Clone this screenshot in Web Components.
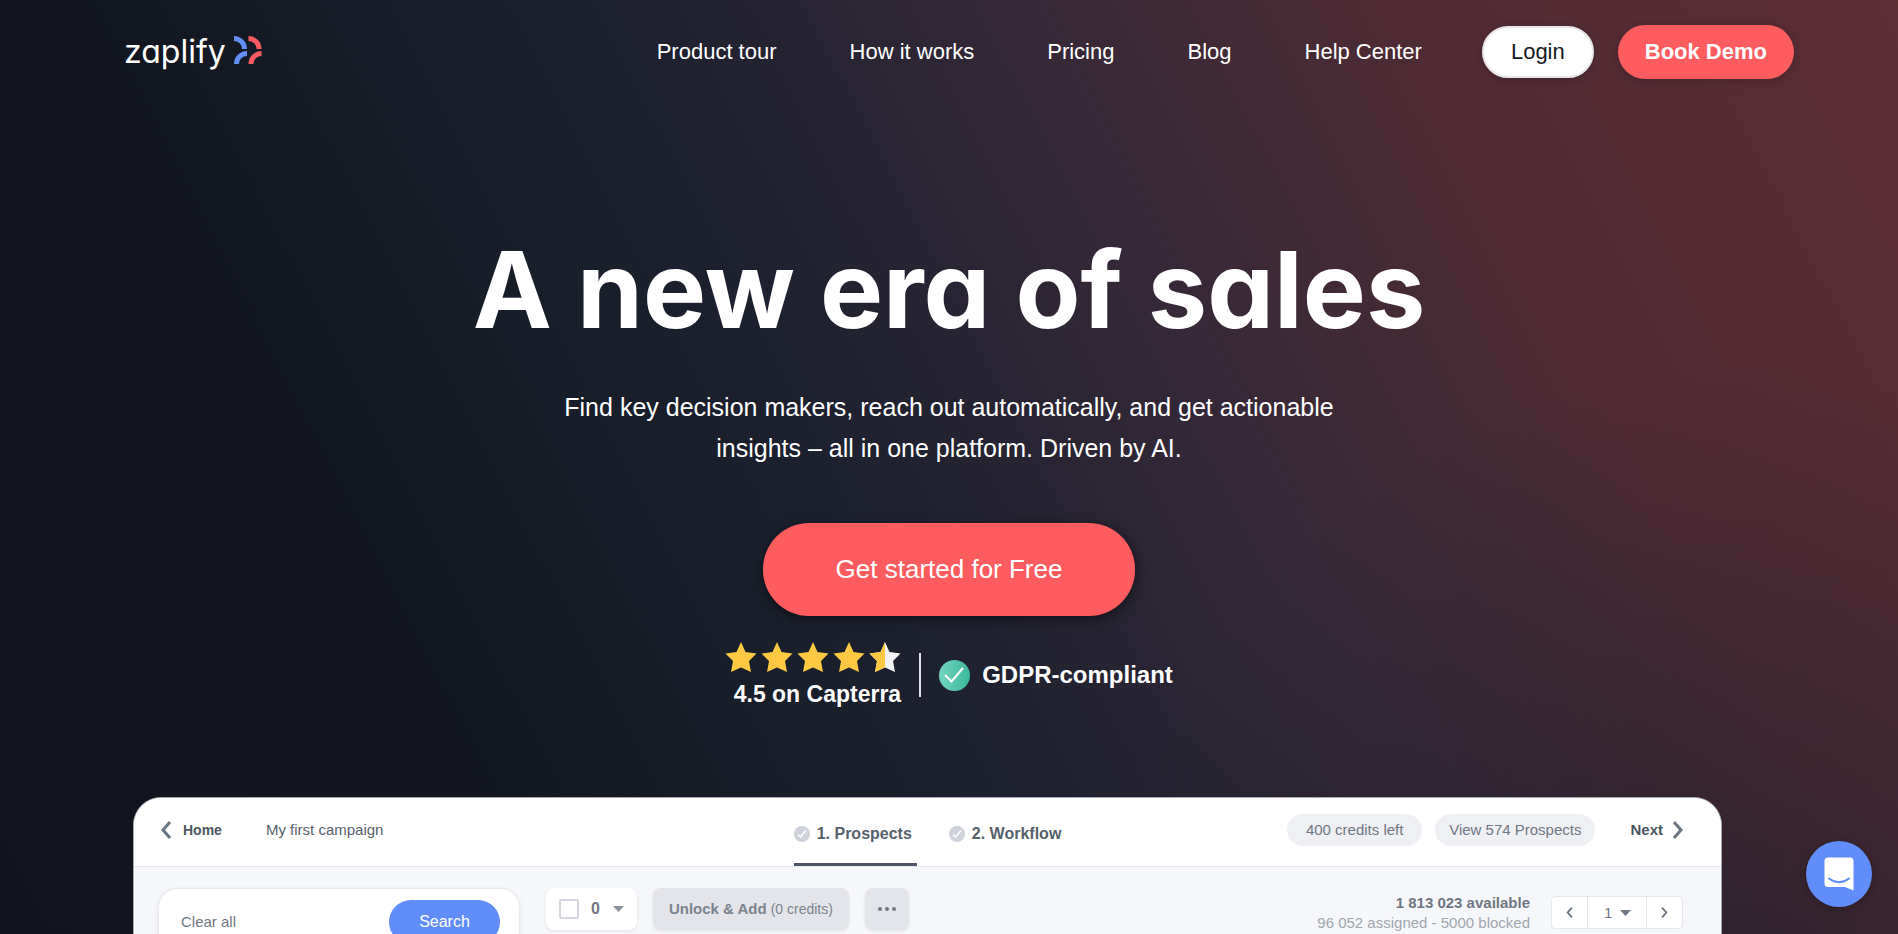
<!DOCTYPE html>
<html lang="en">
<head>
<meta charset="utf-8">
<meta name="viewport" content="width=device-width, initial-scale=1">
<title>Zaplify</title>
<style>
  body {
    margin: 0;
    height: 100vh;
    overflow: hidden;
    background:
      radial-gradient(circle at 92% 108%, rgba(24, 26, 40, 0.55) 0%, rgba(24, 26, 40, 0) 32%),
      linear-gradient(63deg, #11141e 0%, #121620 24%, #161d28 34%, #1e2130 46%, #282433 54%, #352838 62%, #442a35 72%, #502b34 79%, #5a2e33 100%);
    color: #fff;
    font-family: "Liberation Sans", Arial, sans-serif;
  }
</style>
</head>
<body>
<page-header>
  <nav-link href="#tour">Product tour</nav-link>
  <nav-link href="#how">How it works</nav-link>
  <nav-link href="#pricing">Pricing</nav-link>
  <nav-link href="#blog">Blog</nav-link>
  <nav-link href="#help">Help Center</nav-link>
  <pill-button slot="actions" variant="light">Login</pill-button>
  <pill-button slot="actions">Book Demo</pill-button>
</page-header>

<hero-section>
  <span slot="title">A new era of sales</span>
  <span slot="text">Find key decision makers, reach out automatically, and get actionable insights – all in one platform. Driven by AI.</span>
  <pill-button slot="action" variant="large">Get started for Free</pill-button>
  <star-rating slot="proof" value="4.5">4.5 on Capterra</star-rating>
  <check-badge slot="proof">GDPR-compliant</check-badge>
</hero-section>

<campaign-panel></campaign-panel>
<chat-launcher></chat-launcher>

<script>
class ZaplifyLogo extends HTMLElement {
  constructor() {
    super();
    this.attachShadow({ mode: "open" });
  }

  connectedCallback() {
    this.shadowRoot.innerHTML = `
      <style>
        :host { display: block; }

        a {
          display: flex;
          align-items: center;
          gap: 8px;
          color: #fff;
          text-decoration: none;
          font: 400 32px/36px Inter, sans-serif;
          font-feature-settings: "cv11";
        }

        svg { display: block; margin-bottom: 4px; }
      </style>
      <a href="#home">zaplify
        <svg width="28" height="28" viewBox="0 0 28 28" fill="none" stroke-width="5" aria-hidden="true">
          <path d="M0 2.500 A10.500 10.500 0 0 1 10.500 13 M2.500 28 A10.500 10.500 0 0 1 13 17.500" stroke="#638df7"/>
          <path d="M14.500 2.500 A10.500 10.500 0 0 1 25 13 M17 28 A10.500 10.500 0 0 1 27.500 17.500" stroke="#fb5a5f"/>
        </svg>
      </a>
    `;
  }
}

class NavLink extends HTMLElement {
  constructor() {
    super();
    this.attachShadow({ mode: "open" });
  }

  connectedCallback() {
    this.shadowRoot.innerHTML = `
      <style>
        :host { display: block; }

        a {
          color: #fff;
          font-size: 22px;
          line-height: 28px;
          white-space: nowrap;
          text-decoration: none;
        }

        a:hover { opacity: 0.8; }
      </style>
      <a href="${this.getAttribute("href")}"><slot></slot></a>
    `;
  }
}

class PillButton extends HTMLElement {
  constructor() {
    super();
    this.attachShadow({ mode: "open" });
  }

  connectedCallback() {
    this.shadowRoot.innerHTML = `
      <style>
        :host { display: block; }

        button {
          display: block;
          padding: 0 27px;
          border: 0;
          border-radius: 27px;
          background: #ff5c5f;
          box-shadow: 0 2px 8px rgba(0, 0, 0, 0.2);
          color: #fff;
          font: 700 22px/54px "Liberation Sans", Arial, sans-serif;
          white-space: nowrap;
          cursor: pointer;
        }

        :host([variant="light"]) button {
          border: 2px solid #e8e6e8;
          background: #fff;
          color: #151a22;
          font-weight: 400;
          line-height: 48px;
        }

        :host([variant="large"]) button {
          padding: 0 73px;
          border-radius: 46px;
          box-shadow: 0 3px 12px rgba(0, 0, 0, 0.5);
          font-size: 26px;
          font-weight: 400;
          line-height: 93px;
        }
      </style>
      <button type="button"><slot></slot></button>
    `;
  }
}

class PageHeader extends HTMLElement {
  constructor() {
    super();
    this.attachShadow({ mode: "open" });
  }

  connectedCallback() {
    this.shadowRoot.innerHTML = `
      <style>
        :host { display: block; }

        header {
          display: flex;
          align-items: center;
          justify-content: space-between;
          padding: 25px 104px 0 124px;
        }

        .right { display: flex; align-items: center; gap: 60px; }
        nav { display: flex; gap: 73px; }
        .actions { display: flex; align-items: center; gap: 24px; }
      </style>
      <header>
        <zaplify-logo></zaplify-logo>
        <div class="right">
          <nav aria-label="Main"><slot></slot></nav>
          <div class="actions"><slot name="actions"></slot></div>
        </div>
      </header>
    `;
  }
}

class HeroSection extends HTMLElement {
  constructor() {
    super();
    this.attachShadow({ mode: "open" });
  }

  connectedCallback() {
    this.shadowRoot.innerHTML = `
      <style>
        :host { display: block; }

        section {
          display: flex;
          flex-direction: column;
          align-items: center;
          padding: 146px 24px 0;
          text-align: center;
        }

        h1 {
          margin: 0;
          font: 700 106px/130px Inter, sans-serif;
          font-feature-settings: "cv11";
        }

        p {
          max-width: 800px;
          margin: 32px 0 54px;
          font-size: 25px;
          line-height: 41px;
        }

        .proof { display: flex; align-items: center; margin-top: 26px; }
      </style>
      <section>
        <h1><slot name="title"></slot></h1>
        <p><slot name="text"></slot></p>
        <slot name="action"></slot>
        <div class="proof"><slot name="proof"></slot></div>
      </section>
    `;
  }
}

class StarRating extends HTMLElement {
  constructor() {
    super();
    this.attachShadow({ mode: "open" });
  }

  connectedCallback() {
    const value = Number(this.getAttribute("value"));
    const shape = "M16 0 L20.500 10 L31.500 11.500 L24 19 L26 30 L16 25.500 L6 30 L8 19 L0.500 11.500 L11.500 10 Z";
    let stars = "";
    for (let i = 0; i < 5; i++) {
      const full = value - i >= 1;
      stars += `
        <svg width="32" height="30" viewBox="0 0 32 30" aria-hidden="true">
          <path d="${shape}" fill="${full ? "#ffc843" : "#f3f3f5"}"/>
          ${full ? "" : '<path d="M16 0 L11.500 10 L0.500 11.500 L8 19 L6 30 L16 25.500 Z" fill="#ffc843"/>'}
        </svg>`;
    }

    this.shadowRoot.innerHTML = `
      <style>
        :host { display: flex; flex-direction: column; align-items: flex-end; }
        .stars { display: flex; gap: 4px; }
        svg { display: block; }
        .label { font-size: 23px; font-weight: 700; line-height: 28px; margin-top: 8px; }
      </style>
      <div class="stars">${stars}</div>
      <div class="label"><slot></slot></div>
    `;
  }
}

class CheckBadge extends HTMLElement {
  constructor() {
    super();
    this.attachShadow({ mode: "open" });
  }

  connectedCallback() {
    this.shadowRoot.innerHTML = `
      <style>
        :host {
          display: flex;
          align-items: center;
          gap: 12px;
          height: 44px;
          margin-left: 18px;
          padding-left: 18px;
          border-left: 2px solid #e4e4e8;
          font-size: 24px;
          font-weight: 700;
        }
      </style>
      <svg width="31" height="31" viewBox="0 0 31 31" aria-hidden="true">
        <defs>
          <linearGradient id="fill"><stop stop-color="#74d4c0"/><stop offset="1" stop-color="#3bb89b"/></linearGradient>
        </defs>
        <circle cx="15.500" cy="15.500" r="15.500" fill="url(#fill)"/>
        <path d="M6 15 L12.500 21.500 L24 8" fill="none" stroke="#fff" stroke-width="2"/>
      </svg>
      <slot></slot>
    `;
  }
}

class CampaignPanel extends HTMLElement {
  constructor() {
    super();
    this.attachShadow({ mode: "open" });
  }

  connectedCallback() {
    const tick = `
      <svg width="16" height="16" viewBox="0 0 16 16" aria-hidden="true">
        <circle cx="8" cy="8" r="8" fill="#cfd2da"/>
        <path d="M4 8.500 L6.500 11 L12 4.500" fill="none" stroke="#fff" stroke-width="1.500"/>
      </svg>`;
    const chevron = (path, w, h) => `
      <svg width="${w}" height="${h}" viewBox="0 0 10 18" fill="none" stroke="#6b7783" stroke-width="3" aria-hidden="true"><path d="${path}"/></svg>`;
    const left = "M9 1 L2 9 L9 17";
    const right = "M1 1 L8 9 L1 17";
    const caret = `<svg class="caret" width="11" height="6" viewBox="0 0 11 6" aria-hidden="true"><path d="M0 0 H11 L5.500 6 Z" fill="currentColor"/></svg>`;

    this.shadowRoot.innerHTML = `
      <style>
        :host {
          display: block;
          margin: 89px 176px 0 133px;
          border: 1px solid #a6a8b0;
          border-radius: 28px 28px 0 0;
          overflow: hidden;
          background: #f6f7fa;
          color: #6f7883;
          font-size: 15px;
          line-height: 20px;
        }

        * { box-sizing: border-box; }
        svg { display: block; flex: none; }
        a { color: #56616c; text-decoration: none; white-space: nowrap; }

        button, select {
          border: 0;
          background: none;
          color: inherit;
          font: inherit;
          white-space: nowrap;
          cursor: pointer;
        }

        header {
          display: grid;
          grid-template-columns: 1fr auto 1fr;
          height: 69px;
          padding: 0 38px 0 27px;
          border-bottom: 1px solid #e6e8ec;
          background: #fff;
        }

        .crumbs, .status { display: flex; align-items: center; padding-bottom: 4px; }
        .crumbs { gap: 44px; }
        .crumbs a { display: flex; align-items: center; gap: 12px; }
        .crumbs a:first-child { color: #4a5661; font-size: 14px; font-weight: 700; }
        .status { justify-content: flex-end; gap: 13px; }

        .tabs { display: flex; gap: 32px; margin-left: 16px; }
        .tabs a {
          display: flex;
          align-items: center;
          gap: 7px;
          padding: 4px 5px 0 0;
          border-top: 3px solid transparent;
          border-bottom: 3px solid transparent;
          font-size: 16px;
          font-weight: 700;
        }
        .tabs a[aria-current] { border-bottom-color: #4c5567; }

        .chip {
          min-width: 135px;
          height: 32px;
          padding: 0 14px;
          border-radius: 16px;
          background: #eff0f4;
        }

        .next {
          display: flex;
          align-items: center;
          gap: 10px;
          margin-left: 22px;
          padding: 0;
          color: #4a5661;
          font-weight: 700;
        }

        .body { display: flex; align-items: flex-start; gap: 26px; padding: 21px 38px 0 24px; }

        .filters {
          display: flex;
          align-items: flex-start;
          justify-content: space-between;
          width: 362px;
          height: 200px;
          padding: 11px 19px 0 22px;
          border: 1px solid #e9ebef;
          border-radius: 20px;
          background: #fff;
          box-shadow: 0 1px 4px rgba(40, 50, 70, 0.1);
        }
        .clear { padding: 0; line-height: 44px; }
        .search {
          width: 111px;
          height: 44px;
          border-radius: 22px;
          background: #608df9;
          color: #fff;
          font-size: 16px;
        }

        .tools { display: flex; gap: 16px; }
        .select-all, .unlock, .more {
          display: flex;
          align-items: center;
          height: 42px;
          border-radius: 8px;
          box-shadow: 0 1px 3px rgba(40, 50, 70, 0.1);
        }
        .select-all { gap: 13px; padding: 0 13px; background: #fff; }
        .select-all label { display: flex; align-items: center; gap: 12px; font-size: 16px; }
        .select-all button { padding: 0; }
        input {
          appearance: none;
          width: 20px;
          height: 20px;
          margin: 0;
          border: 2px solid #d3d6de;
          border-radius: 2px;
        }
        .caret { color: #8a929b; }
        .unlock, .more { background: #e4e5eb; }
        .unlock { gap: 4px; padding: 0 16px; font-weight: 700; color: #7b848e; }
        .unlock span { font-size: 14px; font-weight: 400; }
        .more { justify-content: center; width: 44px; padding: 0; }

        .paging { display: flex; gap: 21px; margin-left: auto; padding-top: 5px; }
        .counts { text-align: right; white-space: nowrap; }
        .counts div + div { color: #a0a7af; }
        .pager {
          display: flex;
          height: 33px;
          margin-top: 3px;
          border: 1px solid #e6e8ec;
          border-radius: 4px;
          background: #fff;
        }
        .pager button { display: grid; place-items: center; width: 35px; padding: 0; }
        .page {
          display: grid;
          grid-template-columns: 1fr;
          align-items: center;
          width: 60px;
          border: solid #e6e8ec;
          border-width: 0 1px;
        }
        .page > * { grid-area: 1 / 1; }
        .page .caret { justify-self: end; margin-right: 15px; color: #6f7883; pointer-events: none; }
        select { appearance: none; width: 100%; padding: 0 0 0 16px; }
      </style>
      <header>
        <div class="crumbs">
          <a href="#home">${chevron(left, 10, 18)}Home</a>
          <a href="#campaign">My first campaign</a>
        </div>
        <nav class="tabs" aria-label="Steps">
          <a href="#prospects" aria-current="step">${tick}1. Prospects</a>
          <a href="#workflow">${tick}2. Workflow</a>
        </nav>
        <div class="status">
          <button class="chip" type="button">400 credits left</button>
          <button class="chip" type="button">View 574 Prospects</button>
          <button class="next" type="button">Next${chevron(right, 10, 18)}</button>
        </div>
      </header>
      <div class="body">
        <div class="filters">
          <button class="clear" type="button">Clear all</button>
          <button class="search" type="button">Search</button>
        </div>
        <div class="tools">
          <div class="select-all">
            <label><input type="checkbox" aria-label="Select all prospects"><b>0</b></label>
            <button type="button" aria-label="Selection options">${caret}</button>
          </div>
          <button class="unlock" type="button">Unlock &amp; Add <span>(0 credits)</span></button>
          <button class="more" type="button" aria-label="More actions">
            <svg width="18" height="4" viewBox="0 0 18 4" fill="#6f7883"><circle cx="2" cy="2" r="2"/><circle cx="9" cy="2" r="2"/><circle cx="16" cy="2" r="2"/></svg>
          </button>
        </div>
        <div class="paging">
          <div class="counts">
            <div><b>1 813 023 available</b></div>
            <div>96 052 assigned - 5000 blocked</div>
          </div>
          <div class="pager">
            <button type="button" aria-label="Previous page">${chevron(left, 7, 11)}</button>
            <div class="page"><select aria-label="Page"><option>1</option></select>${caret}</div>
            <button type="button" aria-label="Next page">${chevron(right, 7, 11)}</button>
          </div>
        </div>
      </div>
    `;
  }
}

class ChatLauncher extends HTMLElement {
  constructor() {
    super();
    this.attachShadow({ mode: "open" });
  }

  connectedCallback() {
    this.shadowRoot.innerHTML = `
      <style>
        :host { position: fixed; right: 26px; bottom: 27px; }

        button {
          display: grid;
          place-items: center;
          width: 66px;
          height: 66px;
          padding: 0;
          border: 0;
          border-radius: 50%;
          background: #608df9;
          box-shadow: 0 2px 10px rgba(0, 0, 0, 0.2);
          cursor: pointer;
        }
      </style>
      <button type="button" aria-label="Open chat">
        <svg width="30" height="34" viewBox="0 0 30 34" aria-hidden="true">
          <path d="M4 0.500 H26 Q29.500 0.500 29.500 4 V33.500 L21 30 H4 Q0.500 30 0.500 26.500 V4 Q0.500 0.500 4 0.500 Z" fill="#fff"/>
          <path d="M5 21.500 Q15 29 25 21.500" fill="none" stroke="#608df9" stroke-width="2" stroke-linecap="round"/>
        </svg>
      </button>
    `;
  }
}

customElements.define("zaplify-logo", ZaplifyLogo);
customElements.define("nav-link", NavLink);
customElements.define("pill-button", PillButton);
customElements.define("page-header", PageHeader);
customElements.define("hero-section", HeroSection);
customElements.define("star-rating", StarRating);
customElements.define("check-badge", CheckBadge);
customElements.define("campaign-panel", CampaignPanel);
customElements.define("chat-launcher", ChatLauncher);
</script>
</body>
</html>
